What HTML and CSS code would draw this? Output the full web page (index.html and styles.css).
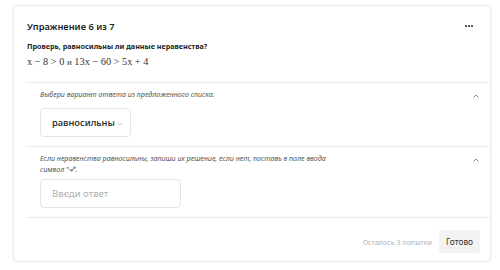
FILE: index.html
```html
<!DOCTYPE html>
<html lang="ru">

<head>
    <meta charset="utf-8">
    <title>Упражнение 6 из 7</title>
    <link rel="stylesheet" href="styles.css">
</head>

<body>
    <div class="card">
        <div class="card-head">
            <div class="title">Упражнение 6 из 7</div>
            <div class="menu-dots">
                <svg width="8" height="2" viewBox="0 0 8 2"><rect x="0" y="0" width="2" height="2" fill="#555"/><rect x="3" y="0" width="2" height="2" fill="#555"/><rect x="6" y="0" width="2" height="2" fill="#555"/></svg>
            </div>
        </div>
        <div class="question">Проверь, равносильны ли данные неравенства?</div>
        <div class="math">x − 8 &gt; 0 <span class="math-and">и</span> 13x − 60 &gt; 5x + 4</div>

        <div class="section">
            <div class="section-body">
                <div class="hint">Выбери вариант ответа из предложенного списка.</div>
                <div class="select">
                    <span>равносильны</span>
                    <svg class="select-arrow" width="6" height="4" viewBox="0 0 6 4"><polyline points="0.5,0.5 3,3 5.5,0.5" fill="none" stroke="#c4c4c4" stroke-width="1"/></svg>
                </div>
            </div>
            <svg class="toggle" width="6" height="4" viewBox="0 0 6 4"><polyline points="0.5,3.5 3,1 5.5,3.5" fill="none" stroke="#888" stroke-width="1"/></svg>
        </div>

        <div class="section">
            <div class="section-body">
                <div class="hint hint-wide">Если неравенства равносильны, запиши их решение, если нет, поставь в поле ввода символ "≠".</div>
                <input class="answer" type="text" placeholder="Введи ответ">
            </div>
            <svg class="toggle" width="6" height="4" viewBox="0 0 6 4"><polyline points="0.5,3.5 3,1 5.5,3.5" fill="none" stroke="#888" stroke-width="1"/></svg>
        </div>

        <div class="card-foot">
            <span class="tries">Осталось 3 попытки</span>
            <button class="done-btn">Готово</button>
        </div>
    </div>
</body>

</html>
```

FILE: styles.css
```css
body {
    margin: 0;
    padding: 0;
    background-color: #ffffff;
    font-family: "Noto Sans", "Open Sans", sans-serif;
    color: #222;
}

.card {
    box-sizing: border-box;
    margin: 5px 0 0 13px;
    width: 478px;
    height: 257px;
    padding-left: 12px;
    border: 1px solid #ececec;
    border-radius: 6px;
    box-shadow: 0 1px 3px rgba(0, 0, 0, 0.08);
    display: flex;
    flex-direction: column;
}

.card-head {
    display: flex;
    justify-content: space-between;
    align-items: center;
    padding: 12px 17px 0 1px;
}

.title {
    font-size: 9.3px;
    line-height: 18px;
    font-weight: 600;
    color: #222;
}

.menu-dots {
    display: flex;
    margin-top: -3px;
}

.question {
    margin-top: 4px;
    padding-left: 1px;
    font-size: 7.2px;
    line-height: 12px;
    font-weight: 700;
    color: #222;
}

.math {
    margin-top: 3px;
    padding-left: 1px;
    font-family: "Liberation Serif", serif;
    font-size: 10.3px;
    line-height: 14px;
    color: #333;
    margin-bottom: 13px;
}

.math-and {
    font-size: 9px;
}

.section {
    display: flex;
    justify-content: space-between;
    align-items: flex-start;
    border-top: 1px solid #ebebeb;
    padding: 0 11px 9px 14px;
}

.section-body {
    display: flex;
    flex-direction: column;
    align-items: flex-start;
}

.hint {
    font-size: 7.1px;
    line-height: 12px;
    font-style: italic;
    color: #555;
    margin-top: 5px;
    margin-bottom: 8px;
}

.hint-wide {
    width: 296px;
    line-height: 10.5px;
    margin-top: 6px;
    margin-bottom: 5px;
}

.toggle {
    margin-top: 11px;
}

.select {
    box-sizing: border-box;
    width: 91px;
    height: 29px;
    border: 1px solid #e4e4e4;
    border-radius: 4px;
    display: flex;
    align-items: center;
    padding-left: 11px;
    font-size: 9.4px;
    font-weight: 500;
    color: #222;
}

.select-arrow {
    margin-left: 2px;
    margin-top: 2px;
}

.answer {
    box-sizing: border-box;
    width: 141px;
    height: 29px;
    border: 1px solid #e4e4e4;
    border-radius: 4px;
    padding: 0 0 0 11px;
    font-family: "Noto Sans", "Open Sans", sans-serif;
    font-size: 9.6px;
    outline: none;
}

.answer::placeholder {
    color: #b0b0b0;
}

.card-foot {
    display: flex;
    justify-content: flex-end;
    align-items: center;
    border-top: 1px solid #ebebeb;
    padding: 12px 10px 0 0;
    gap: 7px;
}

.tries {
    font-size: 7.1px;
    color: #b3b3b3;
}

.done-btn {
    width: 41px;
    height: 23px;
    border: none;
    border-radius: 3px;
    background-color: #f3f3f3;
    font-family: "Noto Sans", "Open Sans", sans-serif;
    font-size: 8.3px;
    color: #333;
    padding: 0;
}
```
